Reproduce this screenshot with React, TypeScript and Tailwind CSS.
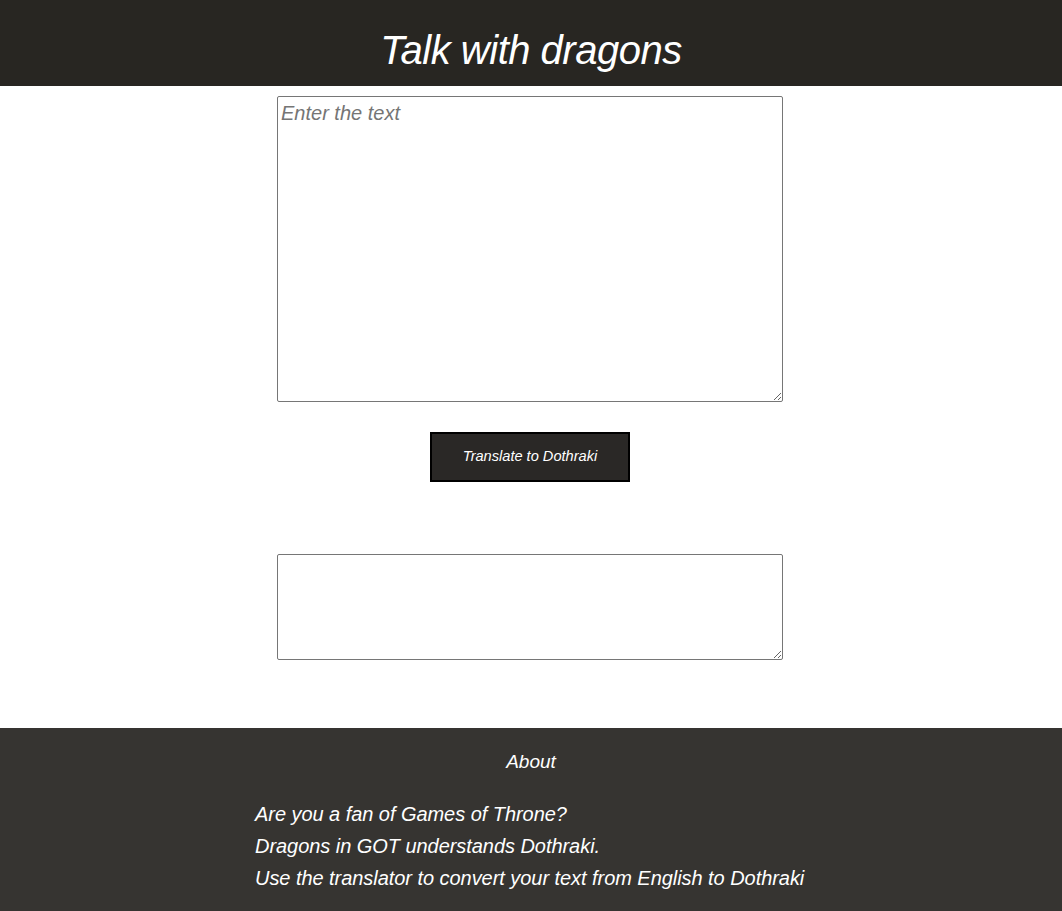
const font = "font-['Liberation_Sans',sans-serif] italic";

export default function App() {
  return (
    <div className={`min-h-screen flex flex-col bg-white ${font}`}>
      {/* header */}
      <header className="h-[86px] bg-[#282622] flex items-center justify-center">
        <h1 className="text-white text-[40px] leading-none pt-[14px] tracking-[-0.5px]">Talk with dragons</h1>
      </header>

      <main className="flex flex-col items-center pt-[10px] pb-[68px] pr-[2px]">
        <textarea
          placeholder="Enter the text"
          className={`w-[506px] h-[306px] border border-[#767676] rounded-[2px] px-[3px] py-[2px] text-[20px] leading-[1.4] placeholder:text-[#757575] ${font}`}
        />
        <button className="mt-[30px] w-[200px] h-[50px] bg-[#2a2826] border-2 border-black text-white text-[14.6px]">
          Translate to Dothraki
        </button>
        <textarea
          className={`mt-[72px] w-[506px] h-[106px] border border-[#767676] rounded-[2px] ${font}`}
        />
      </main>

      {/* footer */}
      <footer className="flex-1 bg-[#363431] text-white flex flex-col items-center pt-[20px] pb-[16px]">
        <h2 className="text-[19px] leading-[28px]">About</h2>
        <div className="mt-[22px] w-[552px] text-[20px] leading-[32px] whitespace-nowrap tracking-[-0.05px]">
          <p>Are you a fan of Games of Throne?</p>
          <p>Dragons in GOT understands Dothraki.</p>
          <p>Use the translator to convert your text from English to Dothraki</p>
        </div>
      </footer>
    </div>
  );
}
